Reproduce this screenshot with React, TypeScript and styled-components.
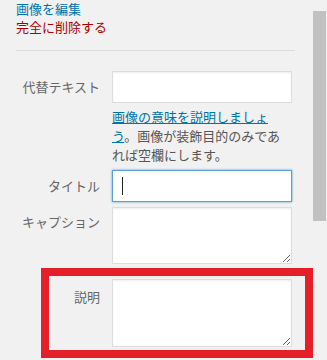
import React from "react";
import styled, { createGlobalStyle } from "styled-components";

const Global = createGlobalStyle`
  html, body { margin: 0; padding: 0; background: #f1f1f1; }
  body {
    font-family: "Noto Sans CJK JP", "Noto Sans", "Liberation Sans", sans-serif;
    font-size: 13px;
  }
`;

const Page = styled.div`
  position: relative;
  display: flex;
  width: 327px;
  height: 360px;
  overflow: hidden;
  background: #f1f1f1;
`;

const Main = styled.div`
  width: 313px;
  padding-left: 16px;
  box-sizing: border-box;
`;

const Actions = styled.div`
  display: flex;
  flex-direction: column;
`;

const ActionLink = styled.a<{ $tone: "blue" | "red" }>`
  font-size: 13px;
  line-height: 18px;
  color: ${(p) => (p.$tone === "red" ? "#a00" : "#0073aa")};
  text-decoration: none;
  cursor: pointer;
`;

const Divider = styled.div`
  width: 279px;
  height: 1px;
  background: #dcdcdc;
  margin-top: 14px;
`;

const Settings = styled.div`
  display: grid;
  grid-template-columns: 84px 180px;
  column-gap: 12px;
  margin-top: 20px;
`;

const Label = styled.label<{ $top?: number; $mt?: number }>`
  grid-column: 1;
  justify-self: end;
  align-self: ${(p) => (p.$top === undefined ? "center" : "start")};
  padding-top: ${(p) => p.$top ?? 0}px;
  margin-top: ${(p) => p.$mt ?? 0}px;
  font-size: 13px;
  line-height: 18px;
  color: #666;
  white-space: nowrap;
`;

const TextInput = styled.input<{ $mt?: number }>`
  grid-column: 2;
  box-sizing: border-box;
  width: 180px;
  height: 32px;
  margin: ${(p) => p.$mt ?? 0}px 0 0 0;
  padding: 0 8px;
  border: 1px solid #ddd;
  background: #fff;
  box-shadow: inset 0 1px 2px rgba(0, 0, 0, 0.07);
  font: inherit;
  outline: none;
`;

const FocusWrap = styled.div<{ $mt?: number }>`
  grid-column: 2;
  position: relative;
  margin-top: ${(p) => p.$mt ?? 0}px;
`;

const FocusInput = styled(TextInput)`
  border-color: #5b9dd9;
  box-shadow: 0 0 2px rgba(30, 140, 190, 0.8);
  display: block;
`;

const Caret = styled.span`
  position: absolute;
  left: 10px;
  top: 7px;
  width: 1px;
  height: 18px;
  background: #222;
`;

const Help = styled.p`
  grid-column: 2;
  margin: 4px 0 0 0;
  font-size: 13px;
  line-height: 19px;
  color: #555;
`;

const HelpLink = styled.a`
  color: #0073aa;
  text-decoration: underline;
`;

const TextArea = styled.textarea<{ $h: number; $mt?: number }>`
  grid-column: 2;
  box-sizing: border-box;
  width: 180px;
  height: ${(p) => p.$h}px;
  margin: ${(p) => p.$mt ?? 0}px 0 0 0;
  padding: 6px 8px;
  border: 1px solid #ddd;
  background: #fff;
  box-shadow: inset 0 1px 2px rgba(0, 0, 0, 0.07);
  font: inherit;
  resize: vertical;
  outline: none;
  display: block;
`;

const Track = styled.div`
  width: 14px;
  padding-top: 11px;
  box-sizing: border-box;
`;

const Thumb = styled.div`
  width: 13px;
  height: 210px;
  background: #c1c1c1;
`;

const Highlight = styled.div`
  position: absolute;
  left: 41px;
  top: 268px;
  width: 272px;
  height: 90px;
  box-sizing: border-box;
  border: 8px solid #e61e28;
  pointer-events: none;
`;

export default function App() {
  return (
    <>
      <Global />
      <Page>
        <Main>
          <Actions>
            <ActionLink $tone="blue">画像を編集</ActionLink>
            <ActionLink $tone="red">完全に削除する</ActionLink>
          </Actions>
          <Divider />
          <Settings>
            <Label>代替テキスト</Label>
            <TextInput type="text" />
            <Help>
              <HelpLink>画像の意味を説明しましょう</HelpLink>。画像が装飾目的のみであれば空欄にします。
            </Help>
            <Label $mt={6} style={{ alignSelf: "center" }}>タイトル</Label>
            <FocusWrap $mt={6}>
              <FocusInput type="text" />
              <Caret />
            </FocusWrap>
            <Label $top={6} $mt={5}>キャプション</Label>
            <TextArea $h={57} $mt={5} />
            <Label $top={9} $mt={15}>説明</Label>
            <TextArea $h={68} $mt={15} />
          </Settings>
        </Main>
        <Track>
          <Thumb />
        </Track>
        <Highlight />
      </Page>
    </>
  );
}
